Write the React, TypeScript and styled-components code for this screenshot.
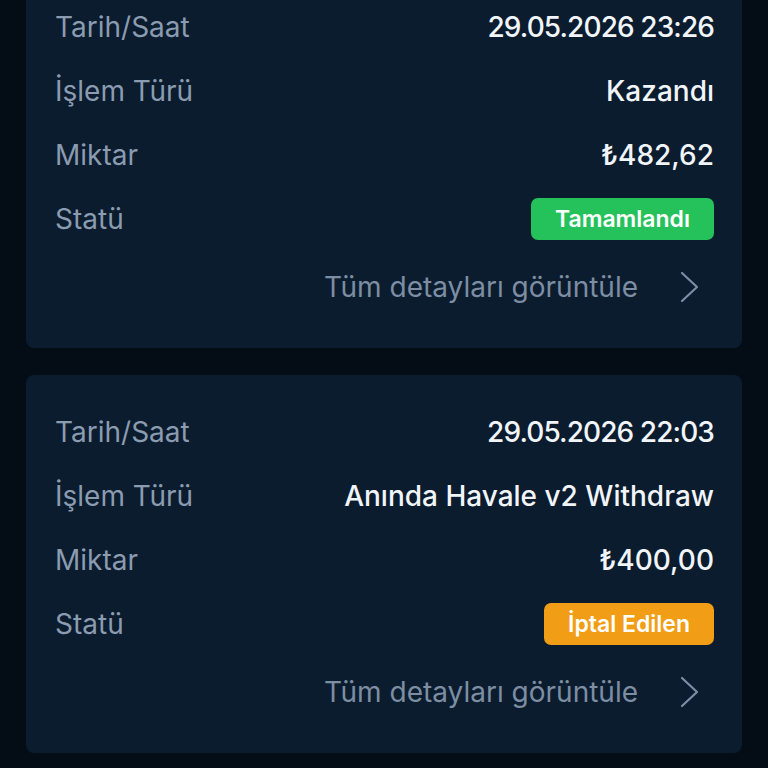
import React from "react";
import styled, { createGlobalStyle } from "styled-components";

const Global = createGlobalStyle`
  html, body { margin: 0; padding: 0; background: #040c15; overflow: hidden; }
  body { font-family: Inter, "Noto Sans", sans-serif; -webkit-font-smoothing: antialiased; }
`;

const Page = styled.div`
  display: flex;
  flex-direction: column;
  gap: 27px;
  padding: 0 26px;
  margin-top: -30px;
`;

const Card = styled.section`
  background: #0a1c2e;
  border-radius: 8px;
  padding: 25px 28px 37px 29px;
  display: flex;
  flex-direction: column;
`;

const Row = styled.div`
  height: 64px;
  display: flex;
  align-items: center;
  justify-content: space-between;
`;

const Label = styled.span`
  color: #8b9bb0;
  font-size: 28px;
  font-weight: 400;
`;

const Value = styled.span<{ $tight?: boolean }>`
  color: #f1f5fa;
  font-size: 28px;
  font-weight: 500;
  letter-spacing: ${(p) => (p.$tight ? "-0.9px" : "0")};
`;

const Badge = styled.span<{ $tone: "green" | "orange" }>`
  background: ${(p) => (p.$tone === "green" ? "#25c25c" : "#f29d16")};
  color: #ffffff;
  font-size: 23px;
  font-weight: 600;
  height: 42px;
  display: inline-flex;
  align-items: center;
  padding: 0 24px;
  border-radius: 7px;
`;

const LinkRow = styled.a`
  margin-top: 12px;
  height: 48px;
  display: flex;
  align-items: center;
  justify-content: flex-end;
  gap: 42px;
  color: #7d8da2;
  font-size: 28px;
  font-weight: 400;
  text-decoration: none;
  padding-right: 14px;
`;

const Chevron = () => (
  <svg width="20" height="32" viewBox="0 0 20 32" fill="none">
    <polyline points="2,2 17,16 2,30" stroke="#7d8da2" strokeWidth="2.2" strokeLinecap="round" strokeLinejoin="round" />
  </svg>
);

type Tx = { date: string; type: string; amount: string; status: string; tone: "green" | "orange" };

const data: Tx[] = [
  { date: "29.05.2026 23:26", type: "Kazandı", amount: "₺482,62", status: "Tamamlandı", tone: "green" },
  { date: "29.05.2026 22:03", type: "Anında Havale v2 Withdraw", amount: "₺400,00", status: "İptal Edilen", tone: "orange" },
];

export default function App() {
  return (
    <>
      <Global />
      <Page>
        {data.map((t) => (
          <Card key={t.date}>
            <Row>
              <Label>Tarih/Saat</Label>
              <Value $tight>{t.date}</Value>
            </Row>
            <Row>
              <Label>İşlem Türü</Label>
              <Value>{t.type}</Value>
            </Row>
            <Row>
              <Label>Miktar</Label>
              <Value>{t.amount}</Value>
            </Row>
            <Row>
              <Label>Statü</Label>
              <Badge $tone={t.tone}>{t.status}</Badge>
            </Row>
            <LinkRow href="#">
              <span>Tüm detayları görüntüle</span>
              <Chevron />
            </LinkRow>
          </Card>
        ))}
      </Page>
    </>
  );
}
